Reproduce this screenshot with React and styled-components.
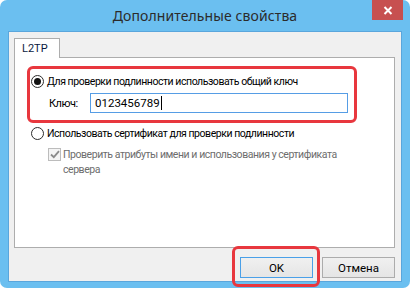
import React from 'react';
import styled, { createGlobalStyle } from 'styled-components';

const Global = createGlobalStyle`
  body {
    margin: 0;
    background: #ffffff;
    font-family: "Noto Sans", "Open Sans", sans-serif;
  }
`;

const Window = styled.div`
  width: 410px;
  height: 288px;
  box-sizing: border-box;
  background: #6bbff0;
  border-radius: 7px;
  padding: 0 8px 6px;
  display: flex;
  flex-direction: column;
`;

const TitleBar = styled.div`
  position: relative;
  height: 31px;
  display: flex;
  align-items: center;
  justify-content: center;
  font-size: 14px;
  color: #2b2b2b;
  letter-spacing: 0.1px;
`;

const CloseButton = styled.div`
  position: absolute;
  top: 0;
  right: -1px;
  width: 31px;
  height: 20px;
  background: #c75050;
  display: flex;
  align-items: center;
  justify-content: center;
`;

const Client = styled.div`
  flex: 1;
  background: #f0f0f0;
  border: 1px solid #5aa6dc;
  padding: 6px 6px 0 5px;
  display: flex;
  flex-direction: column;
  font-family: Roboto, "Noto Sans", sans-serif;
  font-size: 10.5px;
  letter-spacing: -0.45px;
  color: #000;
`;

const TabStrip = styled.div`
  display: flex;
  height: 19px;
`;

const Tab = styled.div`
  background: #fff;
  border: 1px solid #adadad;
  border-bottom: none;
  padding-left: 7px;
  box-sizing: border-box;
  width: 46px;
  height: 20px;
  line-height: 19px;
  font-size: 11px;
  color: #0a1a40;
  letter-spacing: 0;
  position: relative;
  z-index: 1;
`;

const Panel = styled.div`
  height: 191px;
  box-sizing: border-box;
  background: #fff;
  border: 1px solid #adadad;
  padding: 15px 0 0 16px;
`;

const Group = styled.div`
  position: relative;
  width: 326px;
  &::after {
    content: "";
    position: absolute;
    top: -7px;
    left: -4px;
    right: 0;
    bottom: -10px;
    border: 3px solid #e8373e;
    border-radius: 6px;
    pointer-events: none;
  }
`;

const OptionRow = styled.div`
  display: flex;
  align-items: center;
  height: 16px;
  gap: 3px;
  margin-top: ${p => p.$top || 0}px;
`;

const Radio = styled.span`
  width: 13px;
  height: 13px;
  box-sizing: border-box;
  border-radius: 50%;
  border: 1px solid #2c2c2c;
  background: #fff;
  display: flex;
  align-items: center;
  justify-content: center;
  flex-shrink: 0;
  &::before {
    content: "";
    width: 7px;
    height: 7px;
    border-radius: 50%;
    background: ${p => (p.$checked ? '#111' : 'transparent')};
  }
`;

const KeyRow = styled.div`
  display: flex;
  align-items: center;
  margin-top: 4px;
  padding-left: 18px;
`;

const KeyLabel = styled.span`
  width: 41px;
  font-size: 11px;
`;

const Input = styled.div`
  width: 258px;
  height: 20px;
  box-sizing: border-box;
  border: 1px solid #569de5;
  background: #fff;
  padding-left: 4px;
  display: flex;
  align-items: center;
  font-size: 11.5px;
  letter-spacing: 0;
`;

const Caret = styled.span`
  width: 1px;
  height: 14px;
  background: #000;
  margin-left: 1px;
`;

const CheckRow = styled.div`
  display: flex;
  align-items: flex-start;
  gap: 2px;
  margin-top: 6px;
  padding-left: 17px;
  color: #6d6d6d;
  line-height: 15px;
`;

const CheckBox = styled.span`
  width: 13px;
  height: 13px;
  box-sizing: border-box;
  border: 1px solid #bcbcbc;
  background: #f4f4f4;
  margin-top: 1px;
  flex-shrink: 0;
  display: flex;
  align-items: center;
  justify-content: center;
`;

const Footer = styled.div`
  display: flex;
  justify-content: flex-end;
  gap: 9px;
  margin-top: 9px;
`;

const Focused = styled.div`
  position: relative;
  display: flex;
  &::after {
    content: "";
    position: absolute;
    top: -11px;
    left: -8px;
    right: -7px;
    bottom: -9px;
    border: 3px solid #e8373e;
    border-radius: 6px;
    pointer-events: none;
  }
`;

const Button = styled.div`
  width: 73px;
  height: 21px;
  box-sizing: border-box;
  border: 1px solid ${p => (p.$default ? '#4aa0e8' : '#acacac')};
  background: linear-gradient(#f0f0f0, #e5e5e5);
  display: flex;
  align-items: center;
  justify-content: center;
  color: #000;
  font-size: 11.5px;
  letter-spacing: 0;
`;

export default function App() {
  return (
    <>
      <Global />
      <Window>
        <TitleBar>
          Дополнительные свойства
          <CloseButton>
            <svg width="10" height="9" viewBox="0 0 10 9">
              <path d="M1.5 1 L8.5 8 M8.5 1 L1.5 8" stroke="#fff" strokeWidth="2" />
            </svg>
          </CloseButton>
        </TitleBar>
        <Client>
          <TabStrip>
            <Tab>L2TP</Tab>
          </TabStrip>
          <Panel>
            <Group>
              <OptionRow>
                <Radio $checked />
                Для проверки подлинности использовать общий ключ
              </OptionRow>
              <KeyRow>
                <KeyLabel>Ключ:</KeyLabel>
                <Input>
                  0123456789
                  <Caret />
                </Input>
              </KeyRow>
            </Group>
            <OptionRow $top={12}>
              <Radio />
              Использовать сертификат для проверки подлинности
            </OptionRow>
            <CheckRow>
              <CheckBox>
                <svg width="10" height="9" viewBox="0 0 10 9">
                  <path d="M1 4.5 L3.8 7.2 L9 1.2" stroke="#8a8a8a" strokeWidth="1.8" fill="none" />
                </svg>
              </CheckBox>
              <span>
                Проверить атрибуты имени и использования у сертификата
                <br />
                сервера
              </span>
            </CheckRow>
          </Panel>
          <Footer>
            <Focused>
              <Button $default>OK</Button>
            </Focused>
            <Button>Отмена</Button>
          </Footer>
        </Client>
      </Window>
    </>
  );
}
